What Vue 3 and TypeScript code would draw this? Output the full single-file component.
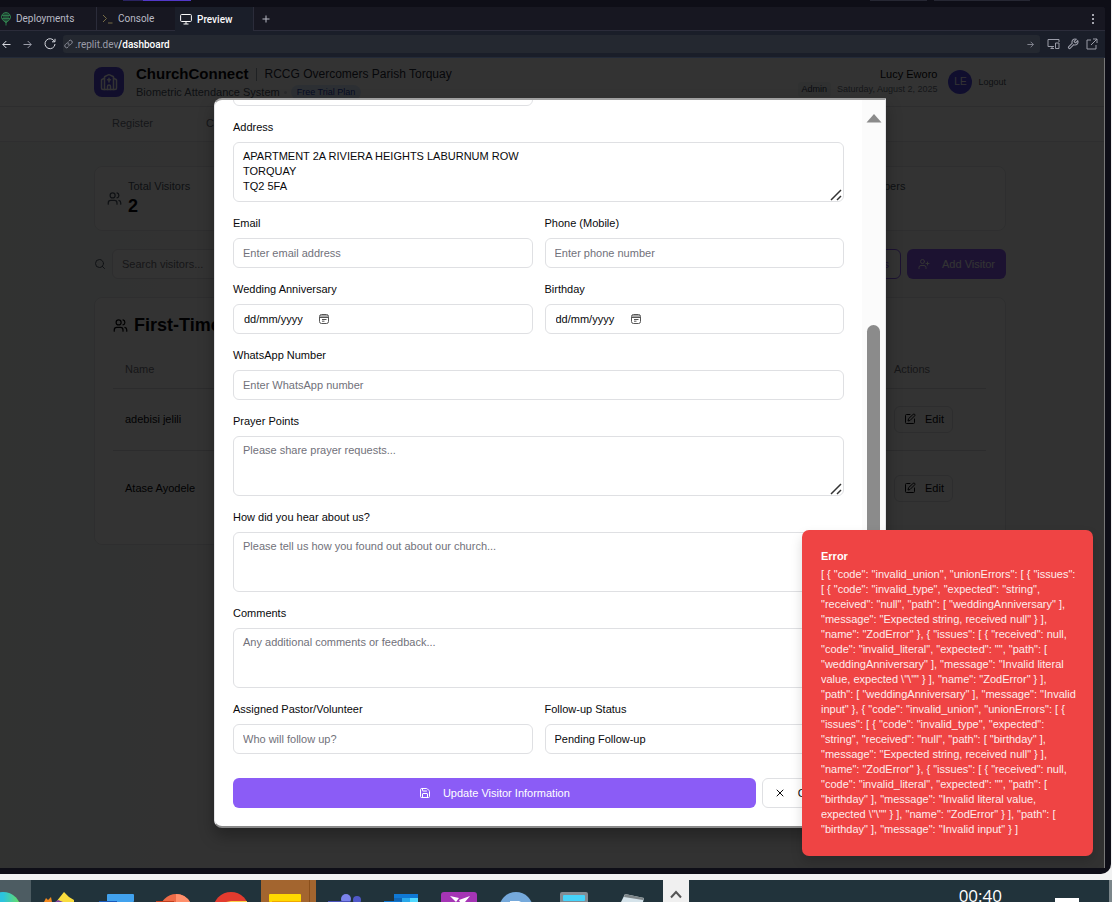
<script setup lang="ts">
import { ref } from 'vue'

interface Visitor {
  id: number
  name: string
}

const visitors: Visitor[] = [
  { id: 1, name: 'adebisi jelili' },
  { id: 2, name: 'Atase Ayodele' },
]

const search = ref('')
const title = ref('')
const address = ref('APARTMENT 2A RIVIERA HEIGHTS LABURNUM ROW\nTORQUAY\nTQ2 5FA')
const email = ref('')
const phone = ref('')
const wedding = ref('dd/mm/yyyy')
const birthday = ref('dd/mm/yyyy')
const whatsapp = ref('')
const prayer = ref('')
const heard = ref('')
const comments = ref('')
const pastor = ref('')
const status = ref('pending')

const errorLines: string[] = [
  '[ { "code": "invalid_union", "unionErrors": [ { "issues":',
  '[ { "code": "invalid_type", "expected": "string",',
  '"received": "null", "path": [ "weddingAnniversary" ],',
  '"message": "Expected string, received null" } ],',
  '"name": "ZodError" }, { "issues": [ { "received": null,',
  '"code": "invalid_literal", "expected": "", "path": [',
  '"weddingAnniversary" ], "message": "Invalid literal',
  'value, expected \\"\\"" } ], "name": "ZodError" } ],',
  '"path": [ "weddingAnniversary" ], "message": "Invalid',
  'input" }, { "code": "invalid_union", "unionErrors": [ {',
  '"issues": [ { "code": "invalid_type", "expected":',
  '"string", "received": "null", "path": [ "birthday" ],',
  '"message": "Expected string, received null" } ],',
  '"name": "ZodError" }, { "issues": [ { "received": null,',
  '"code": "invalid_literal", "expected": "", "path": [',
  '"birthday" ], "message": "Invalid literal value,',
  'expected \\"\\"" } ], "name": "ZodError" } ], "path": [',
  '"birthday" ], "message": "Invalid input" } ]',
]
const errorText = errorLines.join('\n')
</script>

<template>
  <div class="desktop">
    <div class="frame">
      <div class="strip"><i class="s1"></i><i class="s2"></i><span></span><i class="s3"></i><i class="s4"></i></div>
      <div class="workspace">
        <nav class="tabs" aria-label="Workspace tabs">
          <button class="tab deploy" type="button">
            <svg class="green" width="12" height="14" viewBox="0 0 12 14"><circle cx="6" cy="5" r="4.5" /><path d="M2 3.5h8M2 6.5h8M6 .5v13M4 1v8M8 1v8M4 9l2 2 2-2" /></svg>
            Deployments
          </button>
          <button class="tab console" type="button">
            <svg class="olive" width="11" height="10" viewBox="0 0 11 10"><path d="M1 1l3.500 3.500L1 8M6 9h4.500" /></svg>
            Console
          </button>
          <button class="tab active" type="button">
            <svg width="12" height="12" viewBox="0 0 12 12"><rect x=".6" y="1.500" width="10.800" height="7" rx="1" /><path d="M6 8.500v2.500M3.500 11h5" /></svg>
            Preview
          </button>
          <button class="tab plus" type="button" aria-label="New tab">
            <svg width="8" height="8" viewBox="0 0 8 8"><path d="M4 .5v7M.5 4h7" /></svg>
          </button>
          <button class="more" type="button" aria-label="More">
            <svg width="4" height="12" viewBox="0 0 4 12"><path class="dots" d="M1 1h2v2H1zM1 5h2v2H1zM1 9h2v2H1z" /></svg>
          </button>
        </nav>
        <div class="urlbar">
          <div class="history">
            <button type="button" aria-label="Back" class="bright"><svg width="9" height="9" viewBox="0 0 9 9"><path d="M8.500 4.500H.8M4.300 1L.8 4.500 4.300 8" /></svg></button>
            <button type="button" aria-label="Forward"><svg width="9" height="9" viewBox="0 0 9 9"><path d="M.5 4.500h7.700M4.700 1l3.500 3.500L4.700 8" /></svg></button>
            <button type="button" aria-label="Reload" class="bright"><svg width="12" height="12" viewBox="0 0 12 12"><path d="M10.500 3.500A5 5 0 1 0 11 6M11 .8v3H8" /></svg></button>
          </div>
          <div class="address">
            <svg width="9" height="10" viewBox="0 0 24 24"><g stroke-width="2.400"><path d="M10 13a5 5 0 0 0 7.540.540l3-3a5 5 0 0 0-7.070-7.070l-1.720 1.710" /><path d="M14 11a5 5 0 0 0-7.540-.540l-3 3a5 5 0 0 0 7.070 7.070l1.710-1.710" /></g></svg>
            <span class="url">.replit.dev<b>/dashboard</b></span>
            <svg width="7" height="7" viewBox="0 0 9 9"><path d="M.5 4.500h7.700M4.700 1l3.500 3.500L4.700 8" /></svg>
          </div>
          <button type="button" aria-label="Devices"><svg width="13" height="12" viewBox="0 0 13 12"><path d="M7 8.500H1v-7h11V4M3.500 10.500H7M5 8.500v2M8.500 5h3.500v5.500H8.500z" /></svg></button>
          <button type="button" aria-label="Tools"><svg width="12" height="12" viewBox="0 0 24 24"><path stroke-width="2.200" d="M14.700 6.300a1 1 0 0 0 0 1.400l1.600 1.600a1 1 0 0 0 1.400 0l3.770-3.770a6 6 0 0 1-7.940 7.940l-6.910 6.910a2.120 2.120 0 0 1-3-3l6.910-6.910a6 6 0 0 1 7.940-7.940l-3.760 3.760z" /></svg></button>
          <button type="button" aria-label="Open in new window"><svg width="12" height="12" viewBox="0 0 12 12"><path d="M5 2H1v9h9V7M7 1h4v4M11 1L5 7" /></svg></button>
        </div>
      </div>

      <div class="app">
        <header class="top">
          <div class="wrap head">
            <div class="logo">
              <svg class="lucide" width="18" height="18" viewBox="0 0 24 24"><path d="M10 9h4M12 7v5M14 22v-4a2 2 0 0 0-4 0v4" /><path d="M18 22V5.618a1 1 0 0 0-.553-.894l-4.553-2.277a2 2 0 0 0-1.788 0L6.553 4.724A1 1 0 0 0 6 5.618V22" /><path d="m18 7 3.447 1.724a1 1 0 0 1 .553.894V20a2 2 0 0 1-2 2H4a2 2 0 0 1-2-2V9.618a1 1 0 0 1 .553-.894L6 7" /></svg>
            </div>
            <div class="brand">
              <div class="line1"><h1>ChurchConnect</h1><i class="bar"></i><span class="parish">RCCG Overcomers Parish Torquay</span></div>
              <div class="line2"><span>Biometric Attendance System</span><i class="dot"></i><span class="plan">Free Trial Plan</span></div>
            </div>
            <div class="user">
              <div class="uname">Lucy Eworo</div>
              <div class="umeta"><span class="role">Admin</span><span>Saturday, August 2, 2025</span></div>
            </div>
            <div class="avatar">LE</div>
            <button class="logout" type="button">Logout</button>
          </div>
        </header>
        <nav class="nav">
          <div class="wrap links"><a href="#register">Register</a><a href="#checkin">Check In</a></div>
        </nav>
        <main class="wrap main">
          <section class="stats">
            <div class="card stat">
              <svg class="lucide gray" width="15" height="15" viewBox="0 0 24 24"><path d="M16 21v-2a4 4 0 0 0-4-4H6a4 4 0 0 0-4 4v2" /><circle cx="9" cy="7" r="4" /><path d="M22 21v-2a4 4 0 0 0-3-3.870M16 3.130a4 4 0 0 1 0 7.750" /></svg>
              <div><div class="slabel">Total Visitors</div><div class="snum">2</div></div>
            </div>
            <div class="card stat"></div>
            <div class="card stat"></div>
            <div class="card stat last"><div class="slabel">New Members</div></div>
          </section>
          <div class="toolbar">
            <svg class="lucide gray" width="12" height="12" viewBox="0 0 24 24"><circle cx="11" cy="11" r="8" /><path d="m21 21-4.300-4.300" /></svg>
            <input v-model="search" class="field search" type="search" aria-label="Search visitors" placeholder="Search visitors..." />
            <button class="btn outline" type="button">All Members</button>
            <button class="btn primary" type="button">
              <svg class="lucide" width="12" height="12" viewBox="0 0 24 24"><path d="M16 21v-2a4 4 0 0 0-4-4H6a4 4 0 0 0-4 4v2" /><circle cx="9" cy="7" r="4" /><path d="M19 8v6M22 11h-6" /></svg>
              Add Visitor
            </button>
          </div>
          <section class="card list">
            <h2>
              <svg class="lucide" width="15" height="15" viewBox="0 0 24 24"><path d="M16 21v-2a4 4 0 0 0-4-4H6a4 4 0 0 0-4 4v2" /><circle cx="9" cy="7" r="4" /><path d="M22 21v-2a4 4 0 0 0-3-3.870M16 3.130a4 4 0 0 1 0 7.750" /></svg>
              First-Time Visitors
            </h2>
            <table>
              <thead><tr><th>Name</th><th class="act">Actions</th></tr></thead>
              <tbody>
                <tr v-for="v in visitors" :key="v.id">
                  <td>{{ v.name }}</td>
                  <td class="act">
                    <button class="edit" type="button">
                      <svg class="lucide" width="12" height="12" viewBox="0 0 24 24"><path d="M12 3H5a2 2 0 0 0-2 2v14a2 2 0 0 0 2 2h14a2 2 0 0 0 2-2v-7" /><path d="M18.375 2.625a2.121 2.121 0 1 1 3 3L12 15l-4 1 1-4Z" /></svg>
                      Edit
                    </button>
                  </td>
                </tr>
              </tbody>
            </table>
          </section>
        </main>

        <div class="overlay">
          <div class="dialog" role="dialog" aria-label="Visitor information">
            <form class="form" @submit.prevent>
              <div class="row"><input v-model="title" class="field" type="text" aria-label="Title" /><span></span></div>
              <div class="group">
                <label for="address">Address</label>
                <div class="area"><textarea id="address" v-model="address" class="field"></textarea><svg class="grip" width="12" height="12" viewBox="0 0 12 12"><path d="M1 11L11 1M7 11l4-4" /></svg></div>
              </div>
              <div class="row">
                <div class="group"><label for="email">Email</label><input id="email" v-model="email" class="field" type="email" placeholder="Enter email address" /></div>
                <div class="group"><label for="phone">Phone (Mobile)</label><input id="phone" v-model="phone" class="field" type="tel" placeholder="Enter phone number" /></div>
              </div>
              <div class="row">
                <div class="group">
                  <label for="wedding">Wedding Anniversary</label>
                  <div class="field date"><input id="wedding" v-model="wedding" type="text" /><button type="button" aria-label="Pick anniversary"><svg width="10" height="10" viewBox="0 0 10 10"><rect x=".5" y=".5" width="9" height="9" rx="2" /><path d="M1 3.500h8M1 2h8M3 5.500h4.500M3 7.200h2.500" /></svg></button></div>
                </div>
                <div class="group">
                  <label for="birthday">Birthday</label>
                  <div class="field date"><input id="birthday" v-model="birthday" type="text" /><button type="button" aria-label="Pick birthday"><svg width="10" height="10" viewBox="0 0 10 10"><rect x=".5" y=".5" width="9" height="9" rx="2" /><path d="M1 3.500h8M1 2h8M3 5.500h4.500M3 7.200h2.500" /></svg></button></div>
                </div>
              </div>
              <div class="group"><label for="whatsapp">WhatsApp Number</label><input id="whatsapp" v-model="whatsapp" class="field" type="tel" placeholder="Enter WhatsApp number" /></div>
              <div class="group">
                <label for="prayer">Prayer Points</label>
                <div class="area"><textarea id="prayer" v-model="prayer" class="field" placeholder="Please share prayer requests..."></textarea><svg class="grip" width="12" height="12" viewBox="0 0 12 12"><path d="M1 11L11 1M7 11l4-4" /></svg></div>
              </div>
              <div class="group">
                <label for="heard">How did you hear about us?</label>
                <div class="area"><textarea id="heard" v-model="heard" class="field" placeholder="Please tell us how you found out about our church..."></textarea></div>
              </div>
              <div class="group">
                <label for="comments">Comments</label>
                <div class="area"><textarea id="comments" v-model="comments" class="field" placeholder="Any additional comments or feedback..."></textarea></div>
              </div>
              <div class="row">
                <div class="group"><label for="pastor">Assigned Pastor/Volunteer</label><input id="pastor" v-model="pastor" class="field" type="text" placeholder="Who will follow up?" /></div>
                <div class="group"><label for="status">Follow-up Status</label><select id="status" v-model="status" class="field"><option value="pending">Pending Follow-up</option></select></div>
              </div>
              <div class="actions">
                <button class="btn primary save" type="submit">
                  <svg class="lucide" width="12" height="12" viewBox="0 0 24 24"><path d="M15.200 3a2 2 0 0 1 1.400.6l3.800 3.800a2 2 0 0 1 .6 1.400V19a2 2 0 0 1-2 2H5a2 2 0 0 1-2-2V5a2 2 0 0 1 2-2z" /><path d="M17 21v-7a1 1 0 0 0-1-1H8a1 1 0 0 0-1 1v7M7 3v4a1 1 0 0 0 1 1h7" /></svg>
                  Update Visitor Information
                </button>
                <button class="btn cancel" type="button">
                  <svg class="lucide" width="12" height="12" viewBox="0 0 24 24"><path d="M18 6 6 18M6 6l12 12" /></svg>
                  Cancel
                </button>
              </div>
            </form>
            <div class="scroll">
              <svg width="16" height="9" viewBox="0 0 16 9"><path d="M8 0l7.500 8.500H.5z" /></svg>
              <div class="thumb"></div>
            </div>
          </div>
        </div>

        <div class="toast" role="alert">
          <strong>Error</strong>
          <p>{{ errorText }}</p>
        </div>
      </div>
    </div>

    <footer class="taskbar">
      <div class="cell first"><svg width="57" height="22" viewBox="0 0 57 22"><defs><linearGradient id="edge"><stop offset=".5" stop-color="#2cc3df" /><stop offset="1" stop-color="#6be05a" /></linearGradient></defs><circle cx="29" cy="30" r="18" fill="url(#edge)" /></svg></div>
      <div class="cell"><svg width="57" height="22" viewBox="0 0 57 22"><path fill="#f58a1f" d="M13 22l2-4 2 2 3-3 1 5z" /><path fill="#f9dc3e" d="M25 22l8-10 5 5 5 3v2z" /><path fill="#7d3fa0" d="M24 22l3-2 5 2z" /></svg></div>
      <div class="cell"><svg width="57" height="22" viewBox="0 0 57 22"><rect x="19" y="14" width="27" height="8" rx="1" fill="#41a2ee" /><path d="M11 22v-1h18v1z" fill="#185abd" /></svg></div>
      <div class="cell"><svg width="57" height="22" viewBox="0 0 57 22"><circle cx="31" cy="30" r="16" fill="#ee6b47" /><path d="M31 14a16 16 0 0 1 14 8H31z" fill="#ff8f6b" /><path d="M11 21h18v1H11z" fill="#c43e1c" /></svg></div>
      <div class="cell"><svg width="57" height="22" viewBox="0 0 57 22"><circle cx="29" cy="30" r="18" fill="#e33b2e" /><path d="M24 22l5-1h16v1z" fill="#fbd24a" /></svg></div>
      <div class="cell hot"><svg width="57" height="22" viewBox="0 0 57 22"><path d="M48 0h1v22h-1z" fill="#8a4f1c" /><rect x="8" y="14" width="32" height="8" rx="1" fill="#ffd800" /><path d="M11 21h29v1H11z" fill="#f0a800" /></svg></div>
      <div class="cell"><svg width="57" height="22" viewBox="0 0 57 22"><circle cx="29" cy="19" r="5" fill="#7b83eb" /><circle cx="40" cy="20" r="4" fill="#5059c9" /><path d="M11 21h22v1H11z" fill="#4b53bc" /></svg></div>
      <div class="cell"><svg width="57" height="22" viewBox="0 0 57 22"><path d="M20 14h24v8H20z" fill="#0f78d4" /><path d="M20 18h8v4h-8z" fill="#1066b5" /><path d="M28 18h8v4h-8z" fill="#28a8ea" /><path d="M36 18h8v4h-8z" fill="#50d9ff" /><path d="M10 21h16v1H10z" fill="#0f78d4" /></svg></div>
      <div class="cell"><svg width="57" height="22" viewBox="0 0 57 22"><rect x="10" y="12" width="36" height="14" rx="3" fill="#a535b5" /><path d="M19 16l9 2-3 4zM39 16l-11 4 1 2h5z" fill="#fff" /></svg></div>
      <div class="cell"><svg width="57" height="22" viewBox="0 0 57 22"><circle cx="28" cy="29" r="17" fill="#75a9db" /><path d="M22 21h9l2 1H22z" fill="#fff" /></svg></div>
      <div class="cell"><svg width="57" height="22" viewBox="0 0 57 22"><rect x="15" y="12" width="28" height="12" rx="2" fill="#848c94" /><rect x="18" y="15" width="22" height="6" rx="1" fill="#46d3fa" /></svg></div>
      <div class="cell"><svg width="57" height="22" viewBox="0 0 57 22"><path d="M23 14l19 4-1 4H19z" fill="#d5e3ea" /><path d="M23 14l19 4-1 2-19-3z" fill="#7d8588" /></svg></div>
      <button class="chev" type="button" aria-label="Show hidden icons"><svg width="12" height="9" viewBox="0 0 12 9"><path d="M1 7.500l5-5.500 5 5.500" /></svg></button>
      <time class="clock">00:40</time>
      <div class="note"></div>
    </footer>
  </div>
</template>

<style>
html,
body {
  margin: 0;
  overflow: hidden;
}
</style>

<style scoped>
* {
  box-sizing: border-box;
}
.desktop {
  height: 100vh;
  display: flex;
  flex-direction: column;
  background: #f1f2f2;
  font-family: "Liberation Sans", Arial, sans-serif;
  font-size: 11px;
  line-height: 15px;
  color: #09090b;
  overflow: hidden;
}
button,
input,
textarea,
select {
  font: inherit;
  color: inherit;
}
button {
  background: none;
  border: 0;
  padding: 0;
  display: flex;
  align-items: center;
}
svg {
  flex: none;
  display: block;
  fill: none;
  stroke: currentColor;
}
.lucide {
  stroke-width: 2;
  stroke-linecap: round;
  stroke-linejoin: round;
}

/* Workspace chrome */
.frame {
  flex: 1;
  min-height: 0;
  display: flex;
  flex-direction: column;
  background: #0e0e17;
  margin: 0 1px 6px 0;
  padding: 0 6px 6px 0;
  border-bottom-right-radius: 10px;
}
.strip {
  height: 7px;
  display: flex;
  flex: none;
}
.strip span {
  flex: 1;
}
.strip i {
  height: 1px;
}
.s1 {
  width: 20px;
  margin-left: 123px;
  background: #2a2360;
}
.s2 {
  width: 48px;
  background: #5238c8;
}
.s3 {
  width: 57px;
  margin-right: 7px;
  background: #262733;
}
.s4 {
  width: 96px;
  margin-right: 75px;
  background: #262733;
}
.workspace {
  flex: none;
  background: #1a1e29;
  color: #9a9ca8;
  border-top-right-radius: 3px;
  overflow: hidden;
}
.tabs {
  display: flex;
  height: 24px;
  background: #171721;
  border-bottom: 1px solid #2b2c3a;
  font-family: Roboto, sans-serif;
  font-size: 10px;
}
.tab {
  gap: 5px;
  height: 23px;
  color: #b9bac5;
  padding: 0 6px 0 5px;
}
.deploy {
  width: 97px;
  padding-left: 0;
  gap: 4px;
  border-right: 1px solid #2b2c3a;
}
.console {
  width: 78px;
  gap: 5px;
}
.green {
  color: #2f7a4c;
}
.olive {
  color: #776d46;
}
.active {
  width: 79px;
  height: 24px;
  background: #1a1e29;
  color: #fafafa;
  border-right: 1px solid #2b2c3a;
  font-weight: 500;
}
.plus {
  padding-left: 8px;
}
.more {
  margin-left: auto;
  padding-right: 10px;
  color: #a4a5af;
}
.dots {
  fill: currentColor;
  stroke: none;
}
.urlbar {
  height: 27px;
  display: flex;
  align-items: center;
  gap: 7px;
  padding: 0 7px 0 2px;
  border-bottom: 1px solid #232a38;
}
.history {
  display: flex;
  align-items: center;
  gap: 12px;
}
.bright {
  color: #d8d9e0;
}
.address {
  flex: 1;
  display: flex;
  align-items: center;
  gap: 2px;
  height: 18px;
  padding: 0 6px 0 1px;
  border-radius: 3px;
  background: #242830;
  font-family: Roboto, sans-serif;
  font-size: 10px;
}
.url {
  flex: 1;
}
.url b {
  color: #fff;
  font-weight: 500;
}

/* Dashboard */
.app {
  position: relative;
  flex: 1;
  min-height: 0;
  margin-left: -5px;
  overflow: hidden;
  background: linear-gradient(90deg, #f3f9f6, #fbfbfb 30%, #f8f8f8);
  border: 0 solid #777;
  border-width: 0 1px;
}
.wrap {
  width: 100%;
  max-width: 912px;
  margin: 0 auto;
}
.top {
  background: #fff;
  border-bottom: 1px solid #e0e2e5;
}
.head {
  height: 48px;
  display: flex;
  align-items: center;
}
.logo {
  display: flex;
  align-items: center;
  justify-content: center;
  width: 30px;
  height: 30px;
  border-radius: 8px;
  background: #5546dd;
  color: #fff;
}
.brand {
  margin-left: 12px;
  flex: 1;
}
.line1,
.line2 {
  display: flex;
  align-items: center;
}
.line1 {
  height: 20px;
}
h1 {
  margin: 0;
  font-size: 15px;
  line-height: 20px;
}
.bar {
  width: 1px;
  height: 13px;
  margin: 0 8px 0 7px;
  background: #9ca3af;
}
.parish {
  font-size: 12px;
  color: #1f2937;
}
.line2 {
  height: 16px;
  color: #4b5563;
}
.dot {
  width: 3px;
  height: 3px;
  border-radius: 2px;
  margin: 0 4px;
  background: #d1d5db;
}
.plan {
  padding: 0 6px;
  border-radius: 8px;
  background: #dbeafe;
  color: #1e40af;
  font-size: 9px;
}
.user {
  text-align: right;
}
.umeta {
  display: flex;
  gap: 6px;
  color: #6b7280;
  font-size: 9px;
}
.role {
  padding: 0 4px;
  border-radius: 3px;
  background: #f1f3f6;
  color: #374151;
}
.avatar {
  width: 24px;
  height: 24px;
  margin: 0 6px 0 11px;
  border-radius: 12px;
  background: #4f46e5;
  color: #fff;
  line-height: 24px;
  text-align: center;
  font-size: 10px;
}
.logout {
  font-size: 9px;
  color: #4b5563;
}
.nav {
  background: #fff;
  border-bottom: 1px solid #e5e7eb;
}
.links {
  display: flex;
  gap: 53px;
  height: 34px;
  align-items: center;
  padding: 0 0 2px 18px;
}
.links a {
  color: #6b7280;
  text-decoration: none;
}
.main {
  padding-top: 24px;
}
.card {
  background: #fff;
  border: 1px solid #e5e7eb;
  border-radius: 8px;
}
.stats {
  display: grid;
  grid-template-columns: repeat(4, 1fr);
  gap: 18px;
}
.stat {
  height: 65px;
  display: flex;
  align-items: center;
  gap: 6px;
  padding-left: 12px;
}
.stat.last {
  align-items: flex-start;
  padding: 12px 0 0 42px;
}
.gray {
  color: #4b5563;
}
.slabel {
  color: #4b5563;
}
.snum {
  font-size: 18px;
  line-height: 24px;
  font-weight: 700;
}
.toolbar {
  display: flex;
  align-items: center;
  gap: 6px;
  margin: 18px 0;
}
.field {
  width: 100%;
  height: 30px;
  border: 1px solid #dfe0e3;
  border-radius: 6px;
  background: #fff;
  padding: 0 9px;
  outline: none;
}
.field::placeholder {
  color: #71717a;
  opacity: 1;
}
.search {
  flex: 1;
  appearance: none;
}
.btn {
  height: 30px;
  border-radius: 6px;
  padding: 0 11px;
  justify-content: center;
  gap: 12px;
  white-space: nowrap;
}
.outline {
  border: 1px solid #8b5cf6;
  color: #8b5cf6;
  background: #fff;
}
.primary {
  background: #8b5cf6;
  color: #fff;
  font-weight: 500;
}
.list {
  padding: 18px 19px 18px 18px;
}
h2 {
  display: flex;
  align-items: center;
  gap: 6px;
  margin: 0 0 17px;
  font-size: 18px;
  line-height: 18px;
}
table {
  width: 100%;
  border-collapse: collapse;
  table-layout: fixed;
}
th {
  height: 37px;
  font-weight: 400;
  text-align: left;
  color: #71717a;
}
th,
td {
  padding: 0 12px;
  border-bottom: 1px solid #dcdde0;
}
th.act,
td.act {
  width: 92px;
  padding: 0;
}
td {
  height: 62px;
}
tr:last-child td {
  height: 76px;
  border: 0;
}
.edit {
  width: 59px;
  height: 27px;
  padding-left: 9px;
  gap: 9px;
  border: 1px solid #dfe0e3;
  border-radius: 6px;
}

/* Visitor dialog */
.overlay {
  position: absolute;
  inset: 0;
  display: flex;
  justify-content: center;
  padding: 40px 0;
  background: rgba(0, 0, 0, 0.8);
}
.dialog {
  width: 100%;
  max-width: 672px;
  display: flex;
  overflow: hidden;
  background: #fff;
  border: 1px solid #e4e4e7;
  border-top: 2px solid #a0a0a0;
  border-bottom: 2px solid #8a8a8a;
  border-radius: 8px 0 8px 8px;
  box-shadow: 0 8px 16px rgba(0, 0, 0, 0.3);
}
.form {
  flex: 1;
  min-width: 0;
  display: flex;
  flex-direction: column;
  justify-content: flex-end;
  gap: 12px;
  padding: 0 18px 18px;
  overflow: hidden;
}
.form > * {
  flex: none;
}
.row {
  display: grid;
  grid-template-columns: 1fr 1fr;
  gap: 12px;
}
.group {
  display: flex;
  flex-direction: column;
  gap: 6px;
}
label {
  line-height: 18px;
}
.area {
  position: relative;
  display: flex;
}
textarea.field {
  height: 60px;
  padding: 6px 9px;
  resize: none;
  overflow: hidden;
}
.grip {
  position: absolute;
  right: 2px;
  bottom: 1px;
  color: #333;
  stroke-width: 1.5;
}
.date {
  display: flex;
  align-items: center;
}
.date input {
  width: 76px;
  padding: 0 0 0 1px;
  border: 0;
  outline: none;
}
.date button {
  color: #555;
}
select.field {
  appearance: none;
}
.actions {
  display: flex;
  gap: 6px;
  margin-top: 12px;
}
.save {
  flex: 1;
}
.cancel {
  border: 1px solid #dfe0e3;
  background: #fff;
}
.scroll {
  width: 23px;
  display: flex;
  flex-direction: column;
  align-items: center;
  padding-top: 14px;
  background: #fbfbfb;
}
.scroll svg {
  fill: #8b8b8b;
  stroke: none;
}
.thumb {
  width: 13px;
  height: 390px;
  margin-top: 202px;
  border-radius: 7px;
  background: #8b8b8b;
}
.toast {
  position: absolute;
  right: 11px;
  bottom: 12px;
  width: 291px;
  padding: 19px;
  border-radius: 7px;
  background: #ef4444;
  color: #fff;
  box-shadow: 0 6px 12px rgba(0, 0, 0, 0.15);
}
.toast strong {
  display: block;
  margin-bottom: 3px;
}
.toast p {
  margin: 0;
  white-space: pre;
  opacity: 0.9;
}

/* Taskbar */
.taskbar {
  flex: none;
  height: 22px;
  display: flex;
  overflow: hidden;
  background: #21333b;
  border-right: 3px solid #7b868a;
  color: #fff;
}
.taskbar .cell svg {
  stroke: none;
}
.cell {
  flex: none;
  width: 57px;
  overflow: hidden;
}
.first {
  width: 31px;
  display: flex;
  justify-content: flex-end;
  background: #4d5c62;
}
.hot {
  width: 55px;
  margin: 0 1px 0 2px;
  background: #a3652f;
}
.chev {
  width: 26px;
  flex: none;
  justify-content: center;
  margin-left: 4px;
  padding-top: 6px;
  background: #f0f0f0;
  color: #555;
}
.taskbar .chev svg {
  stroke-width: 2;
}
.clock {
  margin-left: auto;
  font-family: "Open Sans", sans-serif;
  font-size: 17px;
  line-height: 32px;
}
.note {
  width: 24px;
  margin: 18px 30px 0 53px;
  background: #fff;
}
</style>
